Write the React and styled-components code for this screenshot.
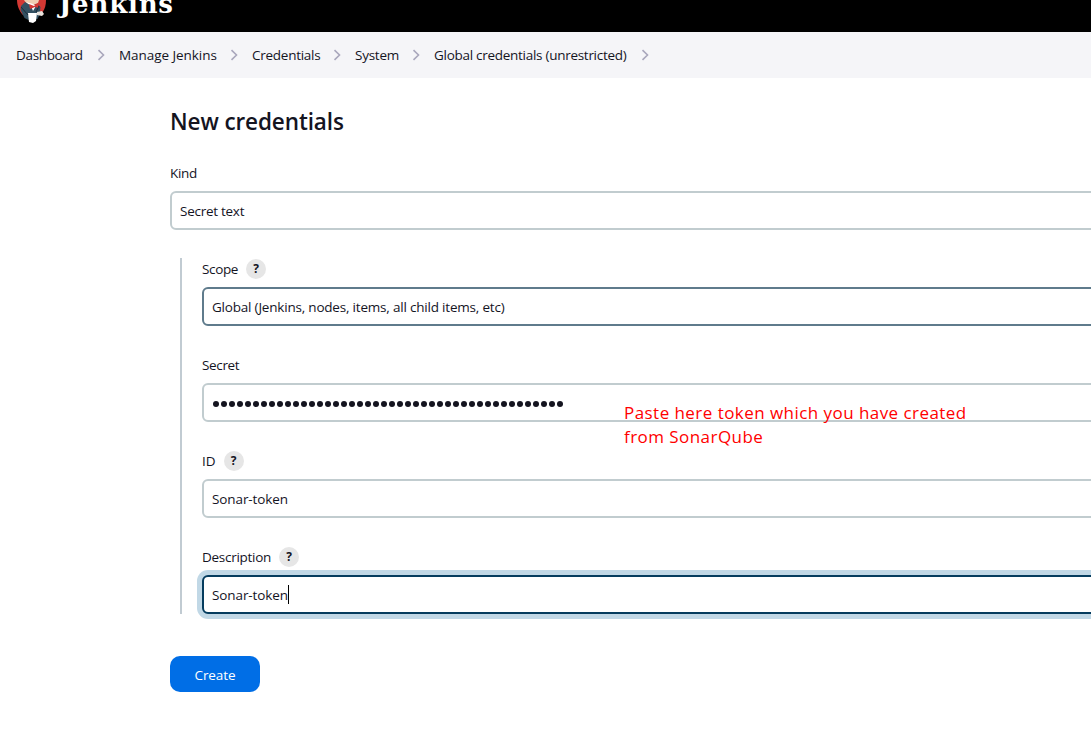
import React from "react";
import styled, { createGlobalStyle } from "styled-components";

const GlobalStyle = createGlobalStyle`
  *, *::before, *::after { box-sizing: border-box; }
  html, body { margin: 0; height: 755px; overflow: hidden; background: #fff; }
  body {
    font-family: "Open Sans", "Noto Sans", sans-serif;
    font-size: 13.5px;
    line-height: 20px;
    color: #14141f;
  }
`;

const Page = styled.div`
  position: relative;
  width: 1091px;
  height: 755px;
  overflow: hidden;
`;

const Header = styled.header`
  display: flex;
  align-items: flex-end;
  height: 32px;
  padding: 0 0 8px 16px;
  background: #000;
  overflow: hidden;
`;

const Wordmark = styled.span`
  margin: 0 0 7px 11px;
  font-family: "DejaVu Serif", serif;
  font-weight: 700;
  font-size: 26px;
  line-height: 26px;
  letter-spacing: 0.8px;
  color: #fff;
`;

const Breadcrumbs = styled.nav`
  display: flex;
  align-items: center;
  height: 46px;
  padding-left: 16px;
  background: #f5f5f8;
`;

const Crumb = styled.span`
  display: flex;
  align-items: center;
  flex: none;
  width: ${(p) => p.$width}px;
  white-space: nowrap;
  letter-spacing: ${(p) => p.$ls || 0}px;
`;

const Separator = styled.svg`
  flex: none;
  width: 8px;
  height: 12px;
  margin: 0 14px;
`;

const Main = styled.main`
  padding: 27px 0 0 170px;
`;

const Title = styled.h1`
  margin: 0 0 25px;
  font-size: 22.5px;
  font-weight: 600;
  line-height: 33px;
  letter-spacing: -0.1px;
`;

const Field = styled.div`
  display: flex;
  flex-direction: column;
  gap: 8px;
`;

const Label = styled.div`
  display: flex;
  align-items: center;
  gap: 8px;
  height: 20px;
  letter-spacing: ${(p) => p.$ls ?? -0.28}px;
`;

const Help = styled.span`
  display: flex;
  align-items: center;
  justify-content: center;
  width: 20px;
  height: 20px;
  border-radius: 50%;
  background: #e6e6e6;
  font-size: 12px;
  font-weight: 700;
  letter-spacing: 0;
`;

const borders = { idle: "#c1cccf", hover: "#5f7b8c", focus: "#053c5e" };

const Control = styled.div`
  display: flex;
  align-items: center;
  height: 39px;
  margin-right: -20px;
  padding-left: 8px;
  border: 2px solid ${(p) => borders[p.$state || "idle"]};
  border-radius: 6px;
  background: #fff;
  box-shadow: ${(p) => (p.$state === "focus" ? "0 0 0 5px #c1d8e6" : "none")};
  letter-spacing: ${(p) => p.$ls || 0}px;
`;

const Group = styled.section`
  display: flex;
  flex-direction: column;
  gap: 29px;
  margin: 28px 0 42px 10px;
  padding: 1px 0 0 20px;
  border-left: 2px solid #c1cbd2;
`;

const Dots = styled.div`
  display: flex;
  gap: 2px;
  margin-left: 1px;
  padding-top: 2px;
`;

const Dot = styled.i`
  width: 6px;
  height: 6px;
  border-radius: 50%;
  background: #14141f;
`;

const Caret = styled.span`
  width: 1px;
  height: 19px;
  background: #000;
`;

const Button = styled.button`
  display: flex;
  align-items: center;
  justify-content: center;
  width: 90px;
  height: 36px;
  padding: 2px 0 0;
  border: 0;
  border-radius: 10px;
  background: #006ee6;
  color: #fff;
  font: inherit;
  letter-spacing: -0.1px;
`;

const Note = styled.p`
  position: absolute;
  left: 624px;
  top: 401px;
  margin: 0;
  font-family: "Open Sans", sans-serif;
  font-weight: 400;
  font-size: 17px;
  line-height: 24px;
  white-space: nowrap;
  color: #f00;
  letter-spacing: 0.45px;
`;

const Butler = () => (
  <svg width="32" height="24" viewBox="0 0 32 24" aria-hidden="true">
    <path d="M1 0h29c0 5-1 9-4 13L7 15C3 11 1 5 1 0z" fill="#d33833" />
    <path d="M8 0h15l-1 3-5 2-6-1z" fill="#efcfb3" />
    <path d="M9 2L5 6 4.500 10l4 8 4 2 9-1 2-4 1-8-3-3-5 2z" fill="#335061" />
    <path d="M10 2l5 4 2 5 3-5-3-2z" fill="#fff" />
    <path d="M13 4l5 2 4-3 1 5-4-1-5 2z" fill="#d33833" />
    <path d="M12 13h9l-1 8-3 2-4-1z" fill="#fff" />
    <path d="M21 12l5-1 2 3-2 2-5-1z" fill="#e8e2dc" />
    <path d="M5 7l7 8M23 6l-3 6" stroke="#1c2b38" fill="none" />
  </svg>
);

const crumbs = [
  { text: "Dashboard", width: 67, ls: -0.33 },
  { text: "Manage Jenkins", width: 97, ls: -0.05 },
  { text: "Credentials", width: 67, ls: -0.26 },
  { text: "System", width: 43, ls: -0.25 },
  { text: "Global credentials (unrestricted)", width: 193, ls: -0.28 },
];

const Chevron = () => (
  <Separator viewBox="0 0 8 12" fill="none" stroke="#a9a7bc" strokeWidth="1.6">
    <path d="M1.5 1.2L6.5 6L1.5 10.8" />
  </Separator>
);

export default function App() {
  return (
    <Page>
      <GlobalStyle />
      <Header>
        <Butler />
        <Wordmark>Jenkins</Wordmark>
      </Header>
      <Breadcrumbs>
        {crumbs.map((c) => (
          <React.Fragment key={c.text}>
            <Crumb $width={c.width} $ls={c.ls}>{c.text}</Crumb>
            <Chevron />
          </React.Fragment>
        ))}
      </Breadcrumbs>
      <Main>
        <Title>New credentials</Title>
        <Field>
          <Label>Kind</Label>
          <Control $ls={-0.27}>Secret text</Control>
        </Field>
        <Group>
          <Field>
            <Label $ls={-0.35}>Scope <Help>?</Help></Label>
            <Control $state="hover" $ls={-0.2}>Global (Jenkins, nodes, items, all child items, etc)</Control>
          </Field>
          <Field>
            <Label $ls={-0.35}>Secret</Label>
            <Control>
              <Dots>{Array.from({ length: 44 }, (_, i) => <Dot key={i} />)}</Dots>
            </Control>
          </Field>
          <Field>
            <Label $ls={0}>ID <Help>?</Help></Label>
            <Control $ls={-0.1}>Sonar-token</Control>
          </Field>
          <Field>
            <Label>Description <Help>?</Help></Label>
            <Control $state="focus" $ls={-0.1}>Sonar-token<Caret /></Control>
          </Field>
        </Group>
        <Button>Create</Button>
      </Main>
      <Note>
        Paste here token which you have created
        <br />
        from SonarQube
      </Note>
    </Page>
  );
}
